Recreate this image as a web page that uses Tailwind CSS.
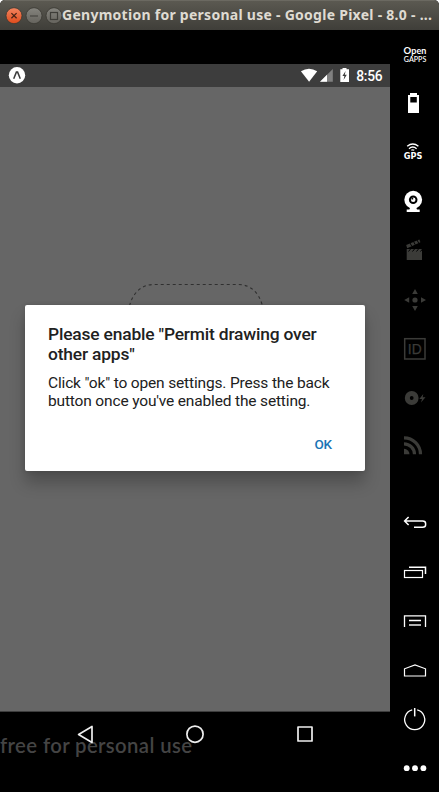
<!DOCTYPE html>
<html lang="en">
<head>
<meta charset="utf-8">
<title>Genymotion</title>
<script src="https://cdn.jsdelivr.net/npm/@tailwindcss/browser@4"></script>
</head>
<body class="bg-white">
<div class="w-[439px] h-[792px] flex flex-col overflow-hidden bg-black rounded-t-[5px] font-['Roboto',sans-serif]">
  <header class="h-[30px] shrink-0 flex items-center bg-linear-to-b from-[#5b5951] to-[#3f3e39] border-t border-[#6b6961] overflow-hidden">
    <svg class="w-[62px] h-[30px] shrink-0" viewBox="0 0 62 30" fill="none">
      <defs>
        <linearGradient id="o" x1="0" y1="0" x2="0" y2="1"><stop stop-color="#f28560"/><stop offset="1" stop-color="#df4b1b"/></linearGradient>
        <linearGradient id="g" x1="0" y1="0" x2="0" y2="1"><stop stop-color="#85847e"/><stop offset="1" stop-color="#65635d"/></linearGradient>
      </defs>
      <circle cx="14" cy="14.7" r="8" fill="url(#o)" stroke="#383731" stroke-width=".8"/>
      <path d="M11.4 12.1l5.2 5.2m0-5.2l-5.2 5.2" stroke="#4a2416" stroke-width="1.3"/>
      <circle cx="34" cy="14.7" r="8" fill="url(#g)" stroke="#383731" stroke-width=".8"/>
      <path d="M30 15h8" stroke="#3e3d38" stroke-width="1.2"/>
      <circle cx="54" cy="14.7" r="8" fill="url(#g)" stroke="#383731" stroke-width=".8"/>
      <rect x="50.5" y="11.5" width="7" height="7" stroke="#3e3d38" stroke-width="1.2"/>
    </svg>
    <svg class="w-[377px] h-[30px] shrink-0" viewBox="0 0 377 30"><text x="0" y="19" textLength="370" font-family="Noto Sans, sans-serif" font-weight="700" font-size="14" fill="#dfdbd2">Genymotion for personal use - Google Pixel - 8.0 - ...</text></svg>
  </header>
  <div class="flex flex-1 min-h-0">
    <main class="w-[390px] flex flex-col pt-[34px]">
      <div class="h-[23px] flex items-center justify-between bg-[#3d3d3d] shrink-0">
        <svg class="w-[34px] h-[23px]" viewBox="0 0 34 23" fill="none"><circle cx="17" cy="11.3" r="8.2" fill="#fff"/><path d="M13.7 14.8l2.7-6.7h1.2l2.7 6.7" stroke="#3d3d3d" stroke-width="1.5"/></svg>
        <svg class="w-[91px] h-[23px]" viewBox="299 64 91 23" fill="#fff">
          <path d="M300.9 71.3Q309 66.3 317.2 71.3L309.1 81.8z"/>
          <path d="M332.8 69v12.8h-12.8z" opacity=".35"/><path d="M327 74.8v7h-7z"/>
          <path d="M340.3 69.3h2.2v-1.2h4v1.2h2.5v12.8h-8.7z"/><path d="M345.6 71l-3.2 5h2l-.8 4 3.2-5.300h-2z" fill="#3d3d3d"/>
          <text x="356.2" y="80.8" textLength="26.5" font-family="Roboto, sans-serif" font-weight="500" font-size="13.8">8:56</text>
        </svg>
      </div>
      <section class="h-[625px] shrink-0 relative bg-[#666] border-b border-[#3d3d3d] pt-[218px] px-[25px] overflow-hidden">
        <svg class="absolute left-[129px] top-[197px] w-[136px] h-[40px]" viewBox="0 0 136 40" fill="none"><path d="M.5 22C4 8 13 .5 25 .5h84C121 .5 130 8 133.5 22" stroke="#303030" stroke-width="1.1" stroke-dasharray="3 3"/></svg>
        <div class="relative h-[166px] bg-white rounded-[2px] px-[23px] pt-[19px] text-[#212121] shadow-[0_12px_16px_rgba(0,0,0,0.24),0_0_5px_rgba(0,0,0,0.15)] whitespace-nowrap">
          <h1 class="text-[17.4px] leading-[20px] font-medium tracking-[-0.18px]">Please enable "Permit drawing over<br>other apps"</h1>
          <p class="mt-[10px] text-[15.5px] leading-[18px] tracking-[-0.16px]">Click "ok" to open settings. Press the back<br>button once you've enabled the setting.</p>
          <div class="mt-[25px] pr-[10px] text-right text-[13.5px] leading-[18px] font-medium tracking-[-0.15px] text-[#1a73b5]">OK</div>
        </div>
      </section>
      <svg class="w-[390px] h-[80px] shrink-0" viewBox="0 712 390 80" fill="none">
        <text x="0" y="753" textLength="192" font-family="Lato, sans-serif" font-weight="600" font-size="20.3" fill="#444">free for personal use</text>
        <g stroke="#eee" stroke-width="1.7" stroke-linejoin="round"><path d="M92 726.5v16l-13.4-8z"/><circle cx="195" cy="734.2" r="8.1"/><rect x="298" y="727" width="14" height="14"/></g>
      </svg>
    </main>
    <aside class="w-[49px] flex flex-col justify-between text-white">
      <div class="flex flex-col">
        <svg class="size-[49px]" viewBox="0 0 49 49" fill="#fff"><g font-family="Lato, sans-serif"><text x="13.5" y="24.3" font-size="9.5" font-weight="700" textLength="8">O</text><text x="21.3" y="24.3" font-size="8.5" font-weight="700" textLength="15" lengthAdjust="spacingAndGlyphs">pen</text><text x="13.8" y="31.8" font-size="7.5" font-weight="600" textLength="22.5" lengthAdjust="spacingAndGlyphs">GAPPS</text></g></svg>
        <svg class="size-[49px]" viewBox="0 0 49 49"><path d="M18 16h2v-2h7v2h2v18H18z" fill="#fff"/><path d="M20.3 18h6.5v5.6h-6.5z" fill="#000"/></svg>
        <svg class="size-[49px]" viewBox="0 0 49 49" fill="none" stroke="#fff"><path d="M17.2 18.3q5.6-4.6 11.2 0M19 20.7q3.8-3.2 7.6 0" stroke-width="1.4"/><path d="M21.3 22.3q1.5-1 3 0" stroke-width="1.2"/><text x="13.7" y="31.3" font-family="DejaVu Sans, sans-serif" font-weight="700" font-size="8" textLength="18.6" lengthAdjust="spacingAndGlyphs" fill="#fff" stroke="none">GPS</text></svg>
        <svg class="size-[49px]" viewBox="0 0 49 49" fill="#fff"><circle cx="23.2" cy="22.7" r="8.9"/><path d="M20 31h6.4l.6 1.5h2.7V35H16.7v-2.5h2.7z"/><circle cx="23.2" cy="22.7" r="4.3" fill="#000"/><circle cx="23.2" cy="22.7" r="2.3"/><path d="M21.5 20.8h1.7v1.7h-1.7z" fill="#000"/></svg>
        <svg class="size-[49px]" viewBox="0 0 49 49" fill="#3b3b38"><path d="M16.7 23H32v11H16.7z"/><path d="M16.2 18.9L29.4 13.6l1 2.7-13.2 5.9z"/><path d="M20 17l1.8 3.3M23.5 15.5l1.8 3.3M27 14l1.8 3.3M18.5 25.5l2-2.5M22.5 25.5l2-2.5M26.5 25.5l2-2.5M30.5 25.5l2-2.5" stroke="#000"/></svg>
        <svg class="size-[49px]" viewBox="0 0 49 49" fill="#3b3b38"><circle cx="25" cy="25" r="2.6"/><path d="M25 14l2.8 5h-5.6zM25 36l2.8-5h-5.6zM14.2 25l5-2.8v5.6zM36 25l-5-2.8v5.6z"/></svg>
        <svg class="size-[49px]" viewBox="0 0 49 49" fill="none" stroke="#3b3b38"><rect x="14.7" y="14.7" width="20.3" height="20.3" stroke-width="1.5"/><text x="17.8" y="30" font-family="Liberation Sans, sans-serif" font-size="13.8" textLength="14" fill="#3b3b38" stroke-width=".25">ID</text></svg>
        <svg class="size-[49px]" viewBox="0 0 49 49" fill="none"><circle cx="21.7" cy="25" r="4.4" stroke="#3b3b38" stroke-width="5"/><path d="M33.3 21l-4 5h2.7l-1 3.5 4.5-5.2h-2.8z" fill="#3b3b38"/></svg>
        <svg class="size-[49px]" viewBox="0 0 49 49" fill="none" stroke="#3b3b38" stroke-width="3.2"><path d="M14 15.8A16.5 16.5 0 0 1 30.5 32.3M14 21.8A10.5 10.5 0 0 1 24.5 32.3"/><path d="M14 26.8a5.5 5.5 0 0 1 5.5 5.5H14z" fill="#3b3b38" stroke="none"/></svg>
      </div>
      <div class="flex flex-col">
        <svg class="size-[49px]" viewBox="0 0 49 49" fill="none" stroke="#fff" stroke-width="1.5"><path d="M18.6 19l-4 4 4 4M14.6 23h18q3 0 3 2.5v1.5q0 2.2-3 2.200H24"/></svg>
        <svg class="size-[49px]" viewBox="0 0 49 49" fill="none" stroke="#fff"><rect x="14.5" y="23.5" width="18" height="7" stroke-width="1.2"/><path d="M19 20.3h16.5V27" stroke-width="1.5"/></svg>
        <svg class="size-[49px]" viewBox="0 0 49 49" fill="none" stroke="#fff"><path d="M14.5 31V19.8h21V31M19 24.5h12" stroke-width="1.3"/><path d="M19 29h12" stroke-width="1.9" stroke="#bbb"/></svg>
        <svg class="size-[49px]" viewBox="0 0 49 49" fill="none" stroke="#fff" stroke-width="1.2"><path d="M14.5 31V23.8L25 20l10.5 3.8V31z"/></svg>
        <svg class="size-[49px]" viewBox="0 0 49 49" fill="none" stroke="#fff" stroke-width="1.3"><path d="M22.2 15.9a10 10 0 1 0 5 0"/><path d="M24.7 14v8.4" stroke-width="1.5"/></svg>
        <svg class="size-[49px]" viewBox="0 0 49 49" fill="#fff"><circle cx="16.7" cy="25.2" r="2.9"/><circle cx="25" cy="25.2" r="2.9"/><circle cx="33.4" cy="25.2" r="2.9"/></svg>
      </div>
    </aside>
  </div>
</div>
</body>
</html>
